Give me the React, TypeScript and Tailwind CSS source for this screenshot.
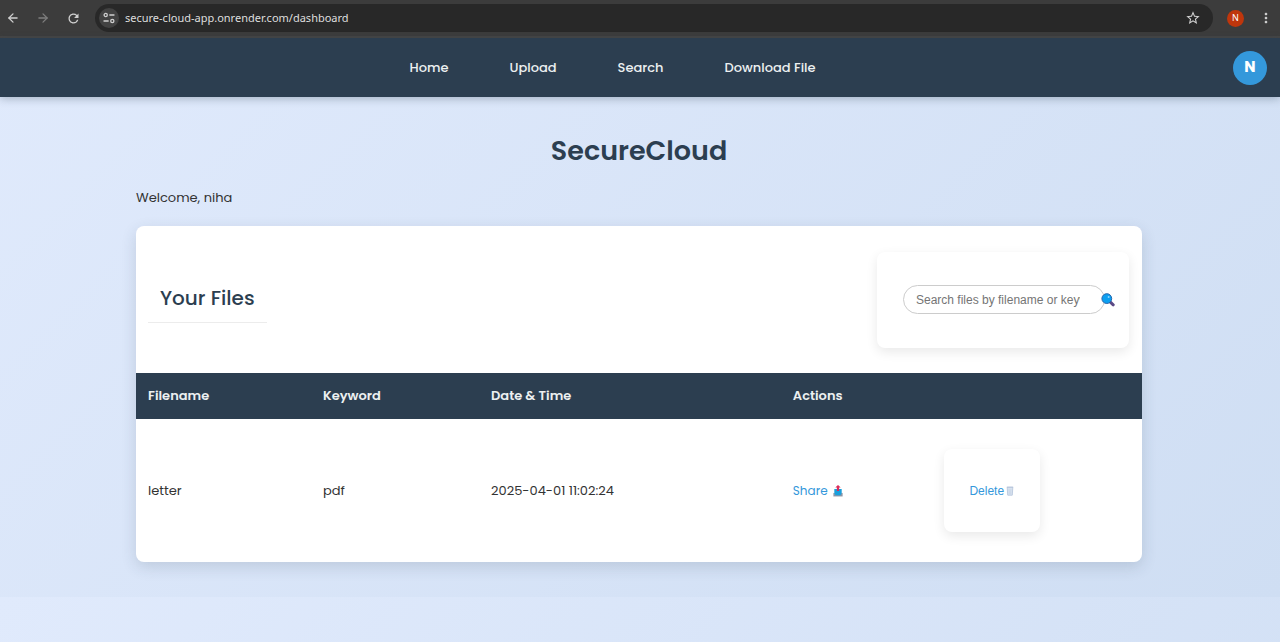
import React from "react";
import { ArrowLeft, ArrowRight } from "lucide-react";
import { MdRefresh, MdStarOutline, MdMoreVert } from "react-icons/md";

const navLinks = ["Home", "Upload", "Search", "Download File"];

const files = [{ name: "letter", keyword: "pdf", date: "2025-04-01 11:02:24" }];

function TuneIcon() {
  return (
    <svg viewBox="0 0 12 12" className="size-3" fill="none" stroke="currentColor" strokeWidth="1.3" strokeLinecap="round" aria-hidden="true">
      <circle cx="2.7" cy="3" r="1.6" />
      <path d="M6.8 3H11M1 9h4.2" />
      <circle cx="9.3" cy="9" r="1.6" />
    </svg>
  );
}

function MagnifierIcon() {
  return (
    <svg viewBox="0 0 14 14" className="size-3.5" aria-hidden="true">
      <path d="M9.4 9.2l2.8 2.6" stroke="#5b4a86" strokeWidth="3" strokeLinecap="round" />
      <circle cx="5.8" cy="5.6" r="4.9" fill="#0b9ff0" stroke="#2666ad" strokeWidth="1" />
      <circle cx="7.6" cy="3.9" r="1" fill="#8bd4ff" />
    </svg>
  );
}

function OutboxIcon() {
  return (
    <svg viewBox="0 0 12 13" className="h-3 w-3" aria-hidden="true">
      <path d="M1 8.6h10v3.8H1z" fill="#8996a8" />
      <path d="M2 4.4h8v4.4L8.6 11H3.4L2 8.8z" fill="#1a9fdc" />
      <path d="M6 0l2.9 2.8H7.2v3.6H4.8V2.8H3.1z" fill="#d92d5b" />
    </svg>
  );
}

function BinIcon() {
  return (
    <svg viewBox="0 0 8 11" className="h-[10px] w-2" fill="none" stroke="#a9bbd5" aria-hidden="true">
      <path d="M.9 1.4l.6 8.7h5l.6-8.7z" fill="#e4ecf6" strokeWidth=".8" />
      <path d="M.5 1.2h7M2.9 2.6l.2 6.7M5.1 2.6l-.2 6.7" strokeWidth=".7" />
    </svg>
  );
}

function BrowserBar() {
  return (
    <div className="flex h-[38px] items-center border-b-2 border-[#454545] bg-[#3c3c3c] px-1.5 font-['Noto_Sans',sans-serif] text-[#d0d0d0]">
      <div className="flex items-center gap-4">
        <button type="button" aria-label="Back"><ArrowLeft size={14} strokeWidth={2.2} /></button>
        <button type="button" aria-label="Forward" className="text-[#7d7d7d]"><ArrowRight size={14} strokeWidth={2.2} /></button>
        <button type="button" aria-label="Reload"><MdRefresh size={15} /></button>
      </div>
      <div className="ml-3.5 flex h-7 flex-1 items-center rounded-full bg-[#282828] pl-1 pr-3">
        <button type="button" aria-label="Site information" className="flex size-5 items-center justify-center rounded-full bg-[#424242]">
          <TuneIcon />
        </button>
        <input
          aria-label="Address"
          readOnly
          value="secure-cloud-app.onrender.com/dashboard"
          className="ml-1.5 min-w-0 flex-1 bg-transparent text-[11px] text-[#dedede] outline-none"
        />
        <button type="button" aria-label="Bookmark"><MdStarOutline size={16} /></button>
      </div>
      <button type="button" aria-label="Profile" className="ml-3.5 flex size-[17px] items-center justify-center rounded-full bg-[#bf360c] text-[9px] text-white">N</button>
      <button type="button" aria-label="Menu" className="ml-3.5"><MdMoreVert size={16} /></button>
    </div>
  );
}

export default function App() {
  return (
    <div className="flex min-h-screen flex-col font-['Poppins','Inter',sans-serif] text-[#333]">
      <BrowserBar />
      <div className="flex-1 bg-[linear-gradient(135deg,#e0eafc,#cfdef3)] bg-[length:100%_559px]">
        <header className="flex h-[59px] items-center bg-[#2c3e50] pr-[13px] shadow-[0_2px_8px_rgba(44,62,80,0.3)]">
          <nav className="flex flex-1 justify-center gap-[61px] pr-2 text-[13px] font-medium text-[#ecf0f1]">
            {navLinks.map((label) => (
              <a key={label} href="#">{label}</a>
            ))}
          </nav>
          <button type="button" aria-label="Account" className="flex size-[34px] items-center justify-center rounded-full bg-[#3498db] text-[15px] font-bold text-white">N</button>
        </header>

        <main className="mx-auto w-full max-w-[1008px] pr-0.5 pt-[33px]">
          <h1 className="text-center text-[27px] leading-[42px] font-semibold text-[#2c3e50]">SecureCloud</h1>
          <p className="mt-3.5 text-[13px] leading-6">Welcome, niha</p>

          <section className="mt-4 overflow-hidden rounded-lg bg-white shadow-[0_5px_15px_rgba(44,62,80,0.16)]">
            <div className="flex h-[147px] items-center justify-between pl-3 pr-[13px]">
              <h2 className="border-b border-[#ececec] px-3 pt-1.5 pb-2 text-[20px] leading-8 font-medium text-[#2c3e50]">Your Files</h2>
              <form className="flex h-24 w-[252px] items-center rounded-lg bg-white pl-[26px] shadow-[0_4px_12px_rgba(0,0,0,0.09)]">
                <input
                  type="text"
                  aria-label="Search files"
                  placeholder="Search files by filename or keyword..."
                  className="h-[29px] w-[202px] rounded-full border border-[#ccc] pl-3 pr-6 font-['Liberation_Sans',sans-serif] text-xs placeholder:text-[#757575]"
                />
                <button type="submit" aria-label="Search" className="-ml-1"><MagnifierIcon /></button>
              </form>
            </div>

            <table className="w-full table-fixed text-left text-[13px]">
              <colgroup>
                <col className="w-[17.4%]" />
                <col className="w-[16.7%]" />
                <col className="w-[30%]" />
                <col className="w-[15%]" />
                <col />
              </colgroup>
              <thead className="bg-[#2c3e50] text-[#ecf0f1]">
                <tr className="h-[46px]">
                  <th className="px-3 font-semibold">Filename</th>
                  <th className="px-3 font-semibold">Keyword</th>
                  <th className="px-3 font-semibold">Date &amp; Time</th>
                  <th className="px-3 font-semibold" colSpan={2}>Actions</th>
                </tr>
              </thead>
              <tbody>
                {files.map((file) => (
                  <tr key={file.name} className="h-[143px]">
                    <td className="px-3">{file.name}</td>
                    <td className="px-3">{file.keyword}</td>
                    <td className="px-3">{file.date}</td>
                    <td className="px-3">
                      <a href="#" className="flex items-center gap-1 text-xs text-[#3498db]">
                        Share <OutboxIcon />
                      </a>
                    </td>
                    <td className="px-3">
                      <form className="flex h-[83px] w-24 items-center justify-center rounded-lg bg-white shadow-[0_4px_12px_rgba(0,0,0,0.09)]">
                        <button type="button" className="flex items-center gap-0.5 font-['Liberation_Sans',sans-serif] text-xs text-[#3498db]">
                          Delete <BinIcon />
                        </button>
                      </form>
                    </td>
                  </tr>
                ))}
              </tbody>
            </table>
          </section>
        </main>
      </div>
    </div>
  );
}
